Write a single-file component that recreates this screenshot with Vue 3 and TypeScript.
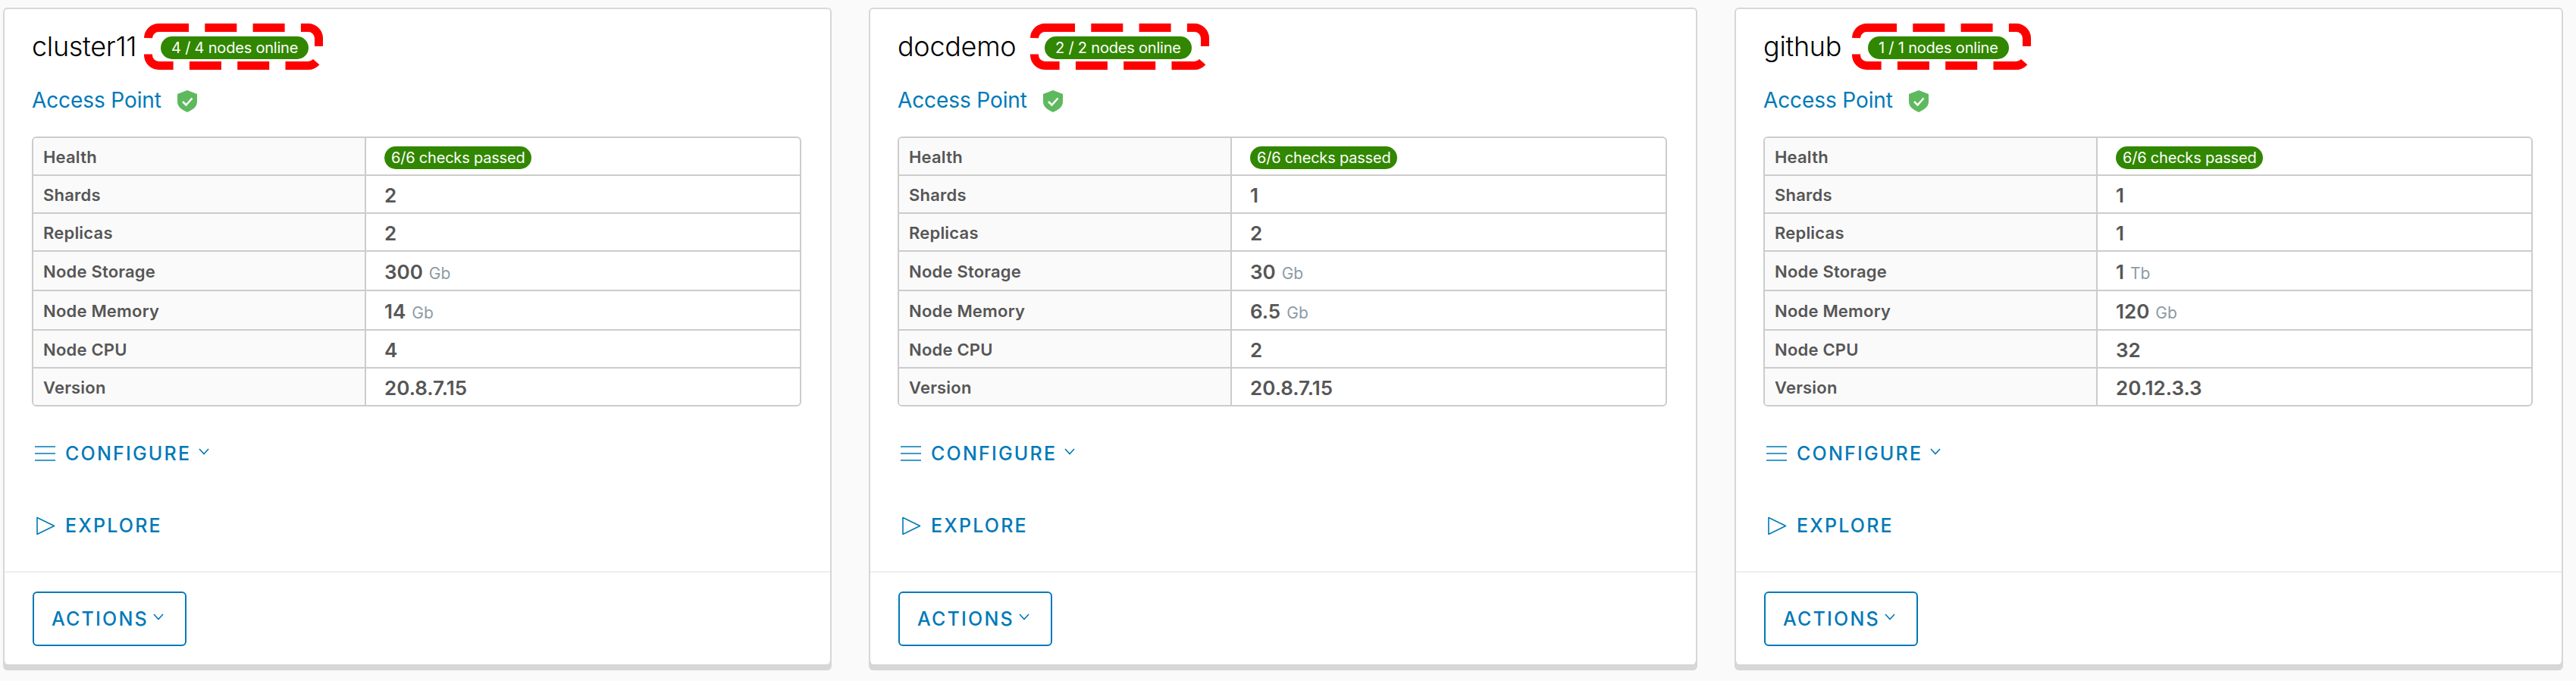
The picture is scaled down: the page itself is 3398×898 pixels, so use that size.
<script setup lang="ts">
interface Row { label: string; value: string; unit?: string }
interface Cluster {
  name: string; online: string; titleWidth: number; annLeft: number; annWidth: number; rows: Row[]
}
const clusters: Cluster[] = [
  { name: 'cluster11', online: '4 / 4 nodes online', titleWidth: 137, annLeft: -22.5, annWidth: 236, rows: [
    { label: 'Shards', value: '2' }, { label: 'Replicas', value: '2' },
    { label: 'Node Storage', value: '300', unit: 'Gb' }, { label: 'Node Memory', value: '14', unit: 'Gb' },
    { label: 'Node CPU', value: '4' }, { label: 'Version', value: '20.8.7.15' } ] },
  { name: 'docdemo', online: '2 / 2 nodes online', titleWidth: 161, annLeft: -19, annWidth: 236, rows: [
    { label: 'Shards', value: '1' }, { label: 'Replicas', value: '2' },
    { label: 'Node Storage', value: '30', unit: 'Gb' }, { label: 'Node Memory', value: '6.5', unit: 'Gb' },
    { label: 'Node CPU', value: '2' }, { label: 'Version', value: '20.8.7.15' } ] },
  { name: 'github', online: '1 / 1 nodes online', titleWidth: 105, annLeft: -21, annWidth: 236, rows: [
    { label: 'Shards', value: '1' }, { label: 'Replicas', value: '1' },
    { label: 'Node Storage', value: '1', unit: 'Tb' }, { label: 'Node Memory', value: '120', unit: 'Gb' },
    { label: 'Node CPU', value: '32' }, { label: 'Version', value: '20.12.3.3' } ] },
]
</script>

<template>
  <main class="page">
    <section v-for="c in clusters" :key="c.name" class="card">
      <div class="block">
        <div class="title-row">
          <h2 class="title" :style="{ width: c.titleWidth + 'px' }">{{ c.name }}</h2>
          <span class="badge-wrap">
            <span class="badge">{{ c.online }}</span>
            <svg class="annotation" :style="{ left: c.annLeft + 'px', width: c.annWidth + 'px' }" :viewBox="`0 0 ${c.annWidth} 61`">
              <rect x="5.5" y="5.5" :width="c.annWidth - 11" height="50" rx="14" ry="14" fill="none" stroke="#ff0000" stroke-width="11" stroke-dasharray="42 21.3" stroke-dashoffset="2.5" />
            </svg>
          </span>
        </div>
        <div class="access">
          <a class="access-link">Access Point</a>
          <svg class="shield" viewBox="0 0 26 29">
            <path d="M13 0 L26 5 V15 C26 22 20 26 13 29 C6 26 0 22 0 15 V5 Z" fill="#5eb95e" />
            <path d="M7 15 L11.5 19.5 L19.5 10.5" fill="none" stroke="#fff" stroke-width="2.5" />
          </svg>
        </div>
        <div class="table">
          <div class="row">
            <div class="label">Health</div>
            <div class="value"><span class="badge checks">6/6 checks passed</span></div>
          </div>
          <div v-for="r in c.rows" :key="r.label" class="row" :class="{ tall: r.unit }">
            <div class="label">{{ r.label }}</div>
            <div class="value">{{ r.value }}<span v-if="r.unit" class="unit">{{ r.unit }}</span></div>
          </div>
        </div>
        <div class="links">
          <a class="link">
            <svg class="ico-menu" viewBox="0 0 27 20"><path d="M0 1H27M0 10H27M0 19H27" stroke="#0079b8" stroke-width="1.6" fill="none" /></svg>
            <span>CONFIGURE</span>
            <svg class="chev" viewBox="0 0 14 9"><path d="M1 1L7 7.5L13 1" stroke="#0079b8" stroke-width="1.6" fill="none" /></svg>
          </a>
          <a class="link explore">
            <svg class="ico-play" viewBox="0 0 27 25"><path d="M3 1.5L25.5 12.5L3 23.5Z" stroke="#0079b8" stroke-width="1.6" fill="none" stroke-linejoin="round" /></svg>
            <span>EXPLORE</span>
          </a>
        </div>
      </div>
      <div class="footer">
        <button class="btn" type="button">
          <span>ACTIONS</span>
          <svg class="chev btn-chev" viewBox="0 0 14 9"><path d="M1 1L7 7.5L13 1" stroke="#0079b8" stroke-width="1.6" fill="none" /></svg>
        </button>
      </div>
    </section>
  </main>
</template>

<style>
html, body { margin: 0; background: #fafafa; }
</style>

<style scoped>
.page {
  display: grid;
  grid-template-columns: repeat(3, 1093px);
  gap: 49px;
  padding: 10px 0 14px 4px;
  font-family: Inter, "Liberation Sans", sans-serif;
  color: #565656;
  box-sizing: border-box;
  min-height: 898px;
  align-items: start;
}
.card {
  box-sizing: border-box;
  background: #fff;
  border: 2px solid #d7d7d7;
  border-bottom-width: 0;
  border-radius: 6px;
  box-shadow: 0 8px 0 #d7d7d7;
  height: 866px;
  display: flex;
  flex-direction: column;
}
.block { padding: 36px 38px 0 36px; box-sizing: border-box; border-bottom: 2px solid #eeeeee; height: 743px; }
.title-row { display: flex; align-items: center; height: 30px; }
.title { margin: -5px 0 0; font-size: 36px; font-weight: 300; color: #000; line-height: 30px; white-space: nowrap; letter-spacing: -0.3px; }
.badge-wrap { position: relative; margin-left: 33px; display: inline-flex; }
.badge {
  display: inline-flex; align-items: center; height: 30px; padding: 0 14px; border-radius: 15px;
  background: #318700; color: #fff; font-size: 20px; font-weight: 400; white-space: nowrap; letter-spacing: -0.2px;
}
.annotation { position: absolute; top: -17px; height: 61px; pointer-events: none; overflow: visible; }
.access { display: flex; align-items: center; margin-top: 34px; height: 40px; }
.access-link { color: #0079b8; font-size: 28px; font-weight: 400; letter-spacing: -0.1px; }
.shield { width: 26px; height: 29px; margin-left: 21px; margin-top: 3px; }
.table {
  margin-top: 28px; border: 2px solid #cccccc; border-radius: 6px; overflow: hidden;
}
.row { display: flex; height: 50px; box-sizing: border-box; border-bottom: 2px solid #cccccc; }
.row:last-child { border-bottom: 0; height: 48px; }
.row.tall { height: 52px; }
.label {
  width: 439px; box-sizing: border-box; padding-left: 13px; background: #fafafa; border-right: 2px solid #cccccc;
  display: flex; align-items: center; font-size: 22px; font-weight: 600; color: #565656; letter-spacing: 0.2px; padding-top: 1px;
}
.value {
  flex: 1; padding-left: 24px; display: flex; align-items: center; font-size: 26px; font-weight: 600; color: #565656; padding-top: 2px;
}
.checks { font-size: 20px; font-weight: 400; padding: 0 9px; margin-top: 2px; }
.unit { font-size: 21px; font-weight: 400; color: #8c9ba5; margin-left: 8px; margin-top: 4px; }
.links { margin-top: 42px; }
.link { display: flex; align-items: center; height: 40px; color: #0079b8; font-size: 25px; font-weight: 500; letter-spacing: 2.2px; padding-left: 4px; }
.explore { margin-top: 55px; }
.ico-menu { width: 27px; height: 20px; margin-right: 13px; }
.ico-play { width: 27px; height: 25px; margin-right: 13px; }
.chev { width: 14px; height: 9px; margin-left: 10px; margin-bottom: 6px; }
.btn-chev { margin-left: 6px; }
.footer { padding: 25px 0 0 37px; }
.btn {
  box-sizing: border-box; width: 203px; height: 72px; border: 2px solid #0079b8; border-radius: 6px; background: #fff; color: #0079b8;
  font-family: inherit; font-size: 25px; font-weight: 500; letter-spacing: 2.2px; display: flex; align-items: center; justify-content: flex-start; padding: 0 0 0 23px;
}
</style>
